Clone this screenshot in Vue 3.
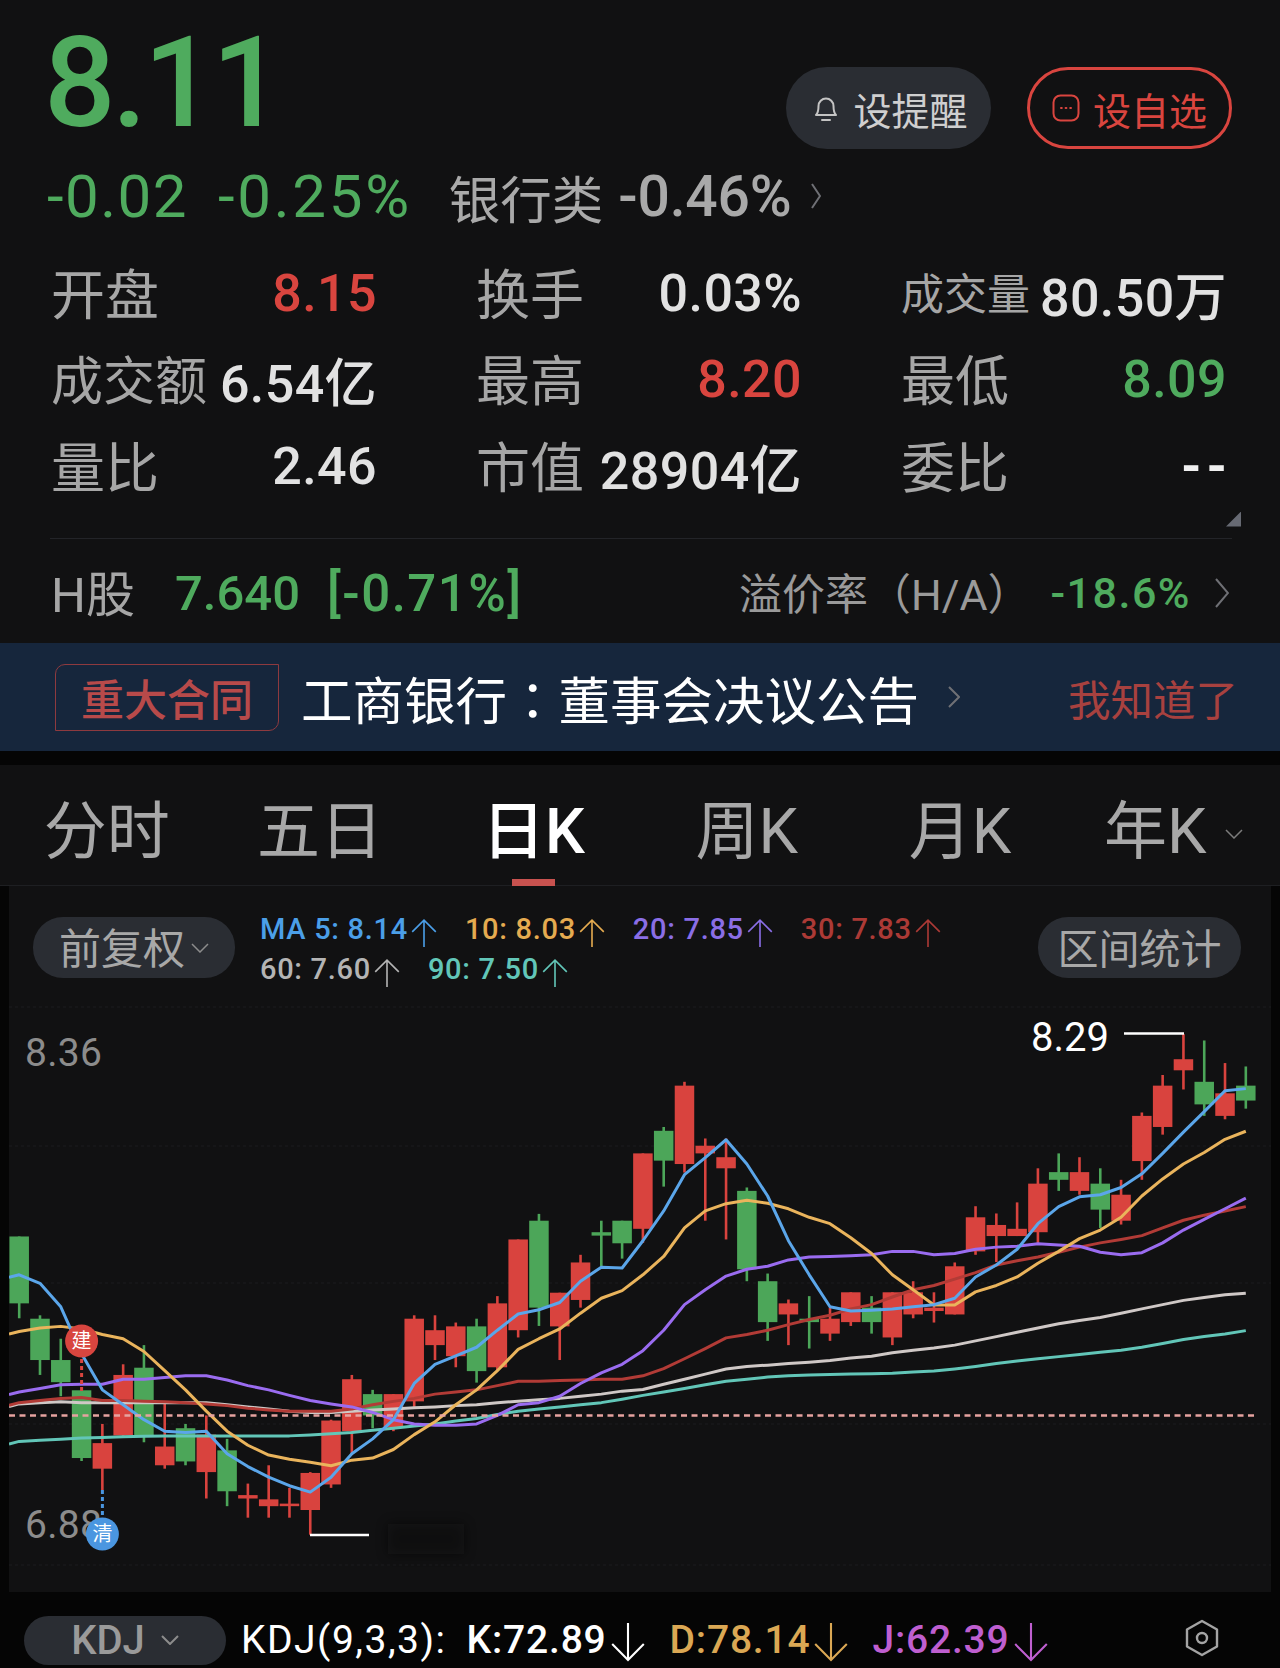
<template>
  <div class="page">
    <section class="quote">
      <div class="head">
        <div class="price">8.11</div>
        <div class="actions">
          <button class="btn btn-alert">
            <svg class="btn-icon" viewBox="0 0 26 30" fill="none" stroke="#c4c4c4" stroke-width="2">
              <path d="M3 22c2-2 2.500-4 2.500-9a7.500 7.500 0 0 1 15 0c0 5 .5 7 2.500 9z" stroke-linejoin="round" />
              <path d="M9 27h8" stroke-linecap="round" />
            </svg>
            设提醒
          </button>
          <button class="btn btn-fav">
            <svg class="btn-icon fav-icon" viewBox="0 0 28 28" fill="none" stroke="#d9453f" stroke-width="2">
              <rect x="1.500" y="1.500" width="25" height="25" rx="7" />
              <path d="M9 14h.8M13.600 14h.8M18.200 14h.8" stroke-linecap="round" />
            </svg>
            设自选
          </button>
        </div>
      </div>

      <div class="change">
        <span class="chg-val">-0.02</span>
        <span class="chg-val chg-pct">-0.25%</span>
        <span class="sector">银行类</span>
        <span class="sector-val">-0.46%</span>
        <svg class="chev sector-chev" viewBox="0 0 10 26"><path d="M1 1l8 12L1 25" /></svg>
      </div>

      <div class="metrics">
        <div v-for="m in metrics" :key="m.label" class="metric">
          <span class="m-label" :class="m.labelSize">{{ m.label }}</span>
          <span class="m-value" :class="m.tone">{{ m.value }}</span>
        </div>
      </div>

      <div class="fold"><i class="fold-tri"></i></div>

      <div class="hshare">
        <div class="h-left">
          <span class="h-name">H股</span>
          <span class="h-price">7.640</span>
          <span class="h-price h-chg">[-0.71%]</span>
        </div>
        <div class="h-right">
          <span class="h-label">溢价率（H/A）</span>
          <span class="h-prem">-18.6%</span>
          <svg class="chev h-chev" viewBox="0 0 14 30"><path d="M1 1l12 14L1 29" /></svg>
        </div>
      </div>
    </section>

    <section class="notice">
      <span class="notice-tag">重大合同</span>
      <span class="notice-title">工商银行<span class="colon">：</span>董事会决议公告</span>
      <svg class="chev notice-chev" viewBox="0 0 12 22"><path d="M1 1l10 10L1 21" /></svg>
      <span class="notice-ok">我知道了</span>
    </section>

    <nav class="tabs">
      <div v-for="t in tabs" :key="t.name" class="tab" :class="{ active: t.active }">
        {{ t.name }}
        <svg v-if="t.more" class="tab-more" viewBox="0 0 18 10"><path d="M1 1l8 8 8-8" /></svg>
      </div>
    </nav>

    <section class="chart-wrap">
      <div class="chart">
        <div class="toolbar">
          <div class="pill pill-adjust">
            前复权
            <svg class="pill-chev" viewBox="0 0 18 10"><path d="M1 1l8 8 8-8" /></svg>
          </div>
          <div class="ma">
            <div v-for="(row, r) in maRows" :key="r" class="ma-row">
              <span v-for="item in row" :key="item.text" class="ma-item" :style="{ color: item.color }">
                {{ item.text }}
                <svg class="ma-arrow" viewBox="0 0 26 28" fill="none" :stroke="item.color" stroke-width="1.500">
                  <path d="M13 27V2M2 13L13 2l11 11" />
                </svg>
              </span>
            </div>
          </div>
          <div class="pill pill-range">区间统计</div>
        </div>

        <svg class="plot" viewBox="9 1000 1262 592" width="1262" height="592">
          <line v-for="g in gridLines" :key="g" x1="9" x2="1271" :y1="g" :y2="g" class="grid" />

          <g v-for="(c, i) in bars" :key="i" :fill="c.color" :stroke="c.color">
            <line :x1="c.x" :x2="c.x" :y1="c.top" :y2="c.bottom" stroke-width="2.600" />
            <rect :x="c.x - 9.750" :y="c.open" width="19.500" :height="c.height" stroke="none" />
          </g>

          <polyline v-for="l in lines" :key="l.color" :points="l.points" :stroke="l.color" fill="none"
            stroke-width="3" stroke-linejoin="round" />

          <line x1="9" x2="1256" y1="1415.500" y2="1415.500" stroke="#e6a3a0" stroke-width="2.500" stroke-dasharray="6 4.500" />

          <text x="25" y="1066" class="axis">8.36</text>
          <text x="25" y="1538" class="axis">6.88</text>

          <text x="1031" y="1051" class="hi">8.29</text>
          <path d="M1124 1033.500h60" stroke="#fff" stroke-width="2.500" fill="none" />
          <path d="M310 1535h59" stroke="#fff" stroke-width="2.500" fill="none" />
          <rect x="388" y="1524" width="76" height="30" fill="#0a0a0a" opacity=".55" filter="url(#smudge)" />

          <path d="M81.600 1359v32" stroke="#d8453f" stroke-width="3" stroke-dasharray="4 3" />
          <path d="M102.400 1490v30" stroke="#4a96e0" stroke-width="3" stroke-dasharray="4 3" />
          <circle cx="81.600" cy="1341" r="16.500" fill="#d8453f" />
          <text x="81.600" y="1348" class="badge">建</text>
          <circle cx="102.400" cy="1534" r="16.500" fill="#4a96e0" />
          <text x="102.400" y="1541" class="badge">清</text>

          <defs>
            <filter id="smudge" x="-30%" y="-60%" width="160%" height="220%"><feGaussianBlur stdDeviation="6" /></filter>
          </defs>
        </svg>
      </div>
    </section>

    <footer class="indicator">
      <div class="pill pill-kdj">
        KDJ
        <svg class="kdj-chev" viewBox="0 0 18 10"><path d="M1 1l8 8 8-8" /></svg>
      </div>
      <span class="kdj-params">KDJ(9,3,3):</span>
      <span v-for="v in kdj" :key="v.text" class="kdj-val" :class="v.cls" :style="{ color: v.color }">
        {{ v.text }}
        <svg class="kdj-arrow" viewBox="0 0 34 38" fill="none" :stroke="v.color" stroke-width="2">
          <path d="M17 1v35M2 21l15 15 15-15" />
        </svg>
      </span>
      <svg class="hex" viewBox="0 0 36 38" fill="none" stroke="#a4a4a4" stroke-width="2.400">
        <path d="M18 2l15 8.500v17L18 36 3 27.500v-17z" stroke-linejoin="round" />
        <circle cx="18" cy="19" r="5" />
      </svg>
    </footer>
  </div>
</template>

<script setup>
const metrics = [
  { label: '开盘', value: '8.15', tone: 'up' },
  { label: '换手', value: '0.03%' },
  { label: '成交量', value: '80.50万', labelSize: 'small' },
  { label: '成交额', value: '6.54亿', labelSize: 'tight' },
  { label: '最高', value: '8.20', tone: 'up' },
  { label: '最低', value: '8.09', tone: 'down' },
  { label: '量比', value: '2.46' },
  { label: '市值', value: '28904亿' },
  { label: '委比', value: '--', tone: 'dash' }
]

const tabs = [
  { name: '分时' },
  { name: '五日' },
  { name: '日K', active: true },
  { name: '周K' },
  { name: '月K' },
  { name: '年K', more: true }
]

const maRows = [
  [
    { text: 'MA 5: 8.14', color: '#4b9fe8' },
    { text: '10: 8.03', color: '#e5ab50' },
    { text: '20: 7.85', color: '#8a6ee6' },
    { text: '30: 7.83', color: '#ac3a36' }
  ],
  [
    { text: '60: 7.60', color: '#b4b4b4' },
    { text: '90: 7.50', color: '#62c6b8' }
  ]
]

const kdj = [
  { text: 'K:72.89', color: '#ffffff', cls: 'k' },
  { text: 'D:78.14', color: '#dba854', cls: 'd' },
  { text: 'J:62.39', color: '#bf5fd0', cls: 'j' }
]

const gridLines = [1007, 1146, 1283, 1424, 1565]

// wick top, wick bottom, body top, body bottom (read off the reference at 2.347 per px)
const candles = [
  [555, 747, 555, 712, 'g'], [740, 880, 748, 845, 'g'], [795, 930, 845, 897, 'g'], [916, 1082, 916, 1075, 'g'],
  [995, 1150, 1040, 1100, 'r'], [855, 1025, 880, 1022, 'r'], [810, 1038, 863, 1022, 'g'], [945, 1100, 1048, 1092, 'r'],
  [995, 1092, 1005, 1083, 'g'], [975, 1170, 1020, 1108, 'r'], [1030, 1188, 1057, 1153, 'g'], [1135, 1215, 1162, 1170, 'r'],
  [1092, 1215, 1172, 1188, 'r'], [1145, 1215, 1182, 1188, 'r'], [1108, 1255, 1110, 1197, 'r'], [985, 1145, 987, 1137, 'r'],
  [880, 1065, 890, 1012, 'r'], [915, 1005, 925, 975, 'g'], [925, 1012, 925, 1003, 'r'], [740, 955, 748, 942, 'r'],
  [740, 845, 775, 810, 'r'], [757, 862, 766, 836, 'r'], [748, 898, 766, 871, 'g'], [695, 870, 712, 862, 'r'],
  [562, 792, 562, 775, 'r'], [502, 765, 518, 722, 'g'], [687, 845, 687, 766, 'r'], [598, 722, 616, 704, 'r'],
  [518, 625, 545, 553, 'g'], [518, 607, 518, 571, 'g'], [360, 570, 360, 537, 'r'], [298, 438, 307, 377, 'g'],
  [192, 405, 201, 385, 'r'], [325, 518, 342, 360, 'r'], [325, 562, 369, 395, 'r'], [440, 660, 448, 632, 'g'],
  [642, 800, 660, 756, 'g'], [703, 810, 712, 738, 'r'], [695, 818, 748, 756, 'g'], [722, 800, 748, 783, 'r'],
  [686, 765, 686, 756, 'r'], [695, 783, 722, 756, 'g'], [686, 810, 686, 792, 'r'], [660, 747, 686, 738, 'r'],
  [686, 757, 722, 730, 'r'], [616, 738, 625, 738, 'r'], [484, 598, 510, 590, 'r'], [501, 615, 528, 554, 'r'],
  [475, 554, 537, 554, 'r'], [395, 570, 431, 545, 'r'], [360, 448, 404, 422, 'g'], [369, 457, 404, 448, 'r'],
  [395, 535, 431, 492, 'g'], [422, 527, 457, 518, 'r'], [264, 422, 272, 378, 'r'], [176, 316, 201, 298, 'r'],
  [80, 210, 139, 165, 'r'], [95, 272, 192, 245, 'g'], [148, 280, 219, 272, 'r'], [156, 255, 201, 236, 'g']
]

const toY = (z) => 1000 + z / 2.347
const toX = (i) => 19.200 + i * 20.790

const bars = candles.map(([top, bottom, open, close, side], i) => ({
  x: toX(i),
  top: toY(top),
  bottom: toY(bottom),
  open: toY(open),
  height: (close - open) / 2.347,
  color: side === 'r' ? '#d9433e' : '#4ca659'
}))

const maData = [
  { color: '#62c6b8', ys: [1036, 1033, 1031, 1028, 1027, 1025, 1024, 1023, 1023, 1023, 1023, 1023, 1023, 1023, 1021, 1018, 1015, 1010, 1005, 1000, 995, 988, 982, 973, 965, 960, 955, 950, 945, 937, 928, 920, 912, 903, 895, 890, 885, 882, 880, 879, 878, 877, 876, 873, 871, 866, 860, 853, 847, 842, 837, 832, 827, 822, 815, 806, 797, 790, 784, 776] },
  { color: '#cfc8c6', ys: [948, 945, 943, 945, 945, 945, 945, 945, 945, 945, 950, 955, 960, 965, 968, 968, 965, 962, 960, 957, 955, 952, 950, 945, 942, 938, 935, 930, 925, 918, 914, 902, 890, 878, 866, 860, 857, 853, 850, 846, 840, 836, 828, 822, 817, 810, 800, 790, 780, 770, 760, 752, 745, 735, 725, 715, 705, 698, 692, 688] },
  { color: '#b23b36', ys: [945, 940, 935, 933, 940, 940, 942, 943, 945, 948, 952, 958, 962, 965, 965, 965, 960, 950, 942, 935, 925, 920, 915, 905, 895, 895, 893, 892, 890, 890, 882, 865, 842, 818, 793, 785, 775, 762, 750, 740, 725, 715, 697, 680, 670, 655, 640, 622, 612, 603, 592, 580, 570, 562, 553, 535, 517, 505, 495, 485] },
  { color: '#9a6cf0', ys: [920, 912, 903, 902, 902, 890, 890, 886, 882, 882, 892, 905, 915, 928, 940, 948, 955, 968, 985, 995, 998, 998, 995, 975, 950, 945, 930, 900, 875, 855, 823, 775, 715, 680, 648, 632, 625, 610, 603, 602, 600, 598, 590, 590, 598, 595, 585, 580, 578, 572, 575, 578, 592, 598, 593, 570, 540, 515, 490, 465] },
  { color: '#eab45c', ys: [778, 770, 766, 772, 785, 795, 825, 870, 915, 965, 1012, 1045, 1068, 1078, 1085, 1093, 1080, 1075, 1055, 1020, 990, 950, 915, 870, 820, 795, 772, 735, 700, 682, 645, 602, 535, 495, 478, 470, 477, 490, 510, 525, 558, 595, 645, 680, 716, 716, 685, 670, 650, 618, 590, 560, 540, 510, 460, 420, 385, 358, 327, 308] },
  { color: '#5ba6ea', ys: [645, 665, 720, 830, 915, 950, 985, 1012, 1015, 1012, 1065, 1095, 1120, 1140, 1155, 1120, 1065, 1030, 985, 900, 855, 835, 815, 775, 737, 727, 710, 660, 627, 629, 565, 495, 410, 370, 328, 385, 460, 565, 645, 720, 730, 728, 725, 720, 715, 700, 650, 622, 585, 525, 485, 462, 457, 440, 408, 360, 310, 262, 213, 208] }
]

const lines = maData.map(({ color, ys }) => ({
  color,
  points: [`9,${toY(ys[0] + 6)}`, ...ys.map((y, i) => `${toX(i)},${toY(y)}`)].join(' ')
}))
</script>

<style>
html, body { margin: 0; background: #111; }
</style>

<style scoped>
.page {
  width: 1280px;
  height: 1668px;
  overflow: hidden;
  background: #111112;
  color: #ddd;
  font-family: Roboto, "Noto Sans CJK SC", sans-serif;
}
.quote { height: 643px; box-sizing: border-box; }

.head {
  height: 160px;
  display: flex;
  justify-content: space-between;
  padding: 0 48px 0 44px;
  box-sizing: border-box;
}
.price {
  font-size: 126px;
  font-weight: 500;
  line-height: 166px;
  color: #4fab5e;
  letter-spacing: -3.500px;
}
.actions { display: flex; gap: 36px; padding-top: 67px; }
.btn {
  width: 205px;
  height: 82px;
  border-radius: 41px;
  border: 0;
  display: flex;
  align-items: center;
  justify-content: center;
  gap: 13px;
  font-family: inherit;
  font-size: 38px;
  padding: 0;
}
.btn-alert { background: #2a2d33; color: #cfcfcf; padding-left: 4px; box-sizing: border-box; gap: 14px; }
.btn-fav { background: transparent; border: 3px solid #d9453f; color: #d9453f; box-sizing: border-box; }
.btn-icon { width: 26px; height: 30px; }
.fav-icon { width: 28px; height: 28px; }

.change {
  height: 90px;
  display: flex;
  align-items: center;
  padding: 0 0 18px 47px;
  box-sizing: border-box;
  white-space: nowrap;
}
.chg-val { font-size: 60px; color: #4fab5e; letter-spacing: 1.500px; }
.chg-pct { margin-left: 30px; letter-spacing: 2.700px; }
.sector { margin-left: 37px; font-size: 51.500px; color: #a9a9a9; }
.sector-val { margin-left: 15px; font-size: 57px; font-weight: 500; color: #a9a9a9; letter-spacing: -.2px; }
.chev { fill: none; stroke: #6f7075; stroke-width: 2; }
.sector-chev { width: 10px; height: 26px; margin-left: 20px; }

.metrics {
  display: grid;
  grid-template-columns: repeat(3, 326px);
  column-gap: 99px;
  grid-auto-rows: 86.500px;
  padding-left: 51px;
}
.metric { display: flex; align-items: center; justify-content: space-between; white-space: nowrap; }
.m-label { font-size: 54px; color: #a6a6a6; margin-bottom: 4px; }
.m-label.small { font-size: 43px; }
.m-label.tight { font-size: 52px; }
.m-value { font-size: 52px; font-weight: 500; color: #e2e2e2; letter-spacing: .4px; }
.m-value.up { color: #d9453f; }
.m-value.down { color: #4fab5e; }
.m-value.dash { font-weight: 700; letter-spacing: 5px; margin-right: -5px; color: #f0f0f0; }

.fold {
  height: 28px;
  display: flex;
  justify-content: flex-end;
  padding: 2px 39px 0 0;
  box-sizing: border-box;
}
.fold-tri {
  width: 15px;
  height: 15px;
  background: #676a73;
  clip-path: polygon(100% 0, 100% 100%, 0 100%);
}

.hshare {
  margin: 0 48px 0 50px;
  height: 105px;
  padding: 5px 0 0 1px;
  box-sizing: border-box;
  border-top: 1px solid #232428;
  display: flex;
  align-items: center;
  justify-content: space-between;
  white-space: nowrap;
}
.h-left { display: flex; align-items: center; }
.h-name { font-size: 49px; color: #a6a6a6; margin-bottom: 6px; }
.h-price { margin-left: 40px; font-size: 49px; font-weight: 500; color: #4fab5e; }
.h-chg { margin-left: 27px; font-size: 51px; letter-spacing: 1.500px; }
.h-right { display: flex; align-items: center; }
.h-label { font-size: 43px; color: #9a9a9a; margin-bottom: 4px; }
.h-prem { margin-left: 20px; font-size: 43px; font-weight: 500; color: #4fab5e; letter-spacing: 1.500px; }
.h-chev { width: 14px; height: 30px; margin-left: 24px; margin-right: 3px; }

.notice {
  height: 108px;
  background: #16263c;
  display: flex;
  align-items: center;
  padding: 0 42px 0 55px;
  box-sizing: border-box;
  white-space: nowrap;
}
.notice-tag {
  width: 224px;
  height: 67px;
  box-sizing: border-box;
  border: 1.500px solid #8e3a3f;
  border-radius: 10px 0 10px 0;
  display: flex;
  align-items: center;
  justify-content: center;
  font-size: 43px;
  font-weight: 500;
  color: #b84a4a;
}
.notice-title { margin-left: 22px; font-size: 51.500px; color: #fff; }
.colon { font-family: "Noto Sans CJK TC", sans-serif; }
.notice-chev { width: 12px; height: 22px; margin-left: 29px; }
.notice-ok { margin-left: auto; font-size: 42.500px; color: #a8413f; }

.tabs {
  margin-top: 14px;
  height: 121px;
  display: grid;
  grid-template-columns: repeat(6, 1fr);
  box-shadow: 0 -14px 0 #050505;
  border-bottom: 1px solid #1e1f22;
  box-sizing: border-box;
}
.tab {
  position: relative;
  display: flex;
  align-items: center;
  justify-content: center;
  font-size: 63px;
  color: #a8a8a8;
}
.tab.active { color: #fff; font-weight: 500; }
.tab.active::after {
  content: "";
  position: absolute;
  left: 50%;
  bottom: -1px;
  width: 43px;
  height: 7px;
  margin-left: -21px;
  background: #c8524f;
}
.tab-more { width: 18px; height: 10px; margin: 18px 0 0 18px; fill: none; stroke: #7c7c7c; stroke-width: 1.500; }

.chart-wrap { background: #050505; padding: 0 9px; height: 706px; }
.chart { background: #111112; height: 706px; }
.toolbar {
  height: 114px;
  display: flex;
  align-items: flex-start;
  padding: 31px 30px 0 24px;
  box-sizing: border-box;
}
.pill {
  height: 61px;
  border-radius: 30px;
  background: #2a2d33;
  display: flex;
  align-items: center;
  justify-content: center;
  color: #a8a8a8;
  white-space: nowrap;
}
.pill-adjust { width: 202px; font-size: 42px; padding-bottom: 4px; box-sizing: border-box; }
.pill-chev { width: 18px; height: 10px; margin: 4px 0 0 6px; fill: none; stroke: #8c8c8c; stroke-width: 1.500; }
.pill-range { width: 203px; margin-left: auto; font-size: 41px; padding-bottom: 4px; box-sizing: border-box; }
.ma { margin: -8px 0 0 25px; }
.ma-row { display: flex; gap: 26px; height: 40px; align-items: center; }
.ma-item { display: flex; align-items: center; gap: 1px; font-size: 29px; font-weight: 500; letter-spacing: .7px; white-space: nowrap; }
.ma-arrow { width: 30px; height: 30px; margin-top: 7px; }

.plot { display: block; }
.grid { stroke: #1c1c1f; stroke-width: 1; stroke-dasharray: 3 3; }
.axis { font-size: 39px; fill: #8c8c8c; font-family: Roboto, sans-serif; letter-spacing: .3px; }
.hi { font-size: 40px; fill: #fff; font-family: Roboto, sans-serif; }
.badge { font-size: 20px; fill: #fff; text-anchor: middle; font-family: "Noto Sans CJK SC", sans-serif; }

.indicator {
  height: 76px;
  background: #050505;
  display: flex;
  align-items: center;
  padding: 20px 60px 0 24px;
  box-sizing: border-box;
  white-space: nowrap;
  font-size: 39px;
}
.pill-kdj { width: 202px; height: 49px; border-radius: 25px; font-size: 40px; font-weight: 500; color: #9a9a9a; }
.kdj-chev { width: 18px; height: 10px; margin-left: 16px; fill: none; stroke: #8c8c8c; stroke-width: 2; }
.kdj-params { margin-left: 15px; color: #fff; letter-spacing: 1.500px; }
.kdj-val { display: flex; align-items: center; gap: 3px; font-weight: 500; letter-spacing: .8px; }
.k { margin-left: 20px; }
.d { margin-left: 24px; }
.j { margin-left: 23px; }
.kdj-arrow { width: 36px; height: 40px; margin-top: 4px; }
.hex { width: 36px; height: 38px; margin-left: auto; margin-top: -4px; }
</style>
